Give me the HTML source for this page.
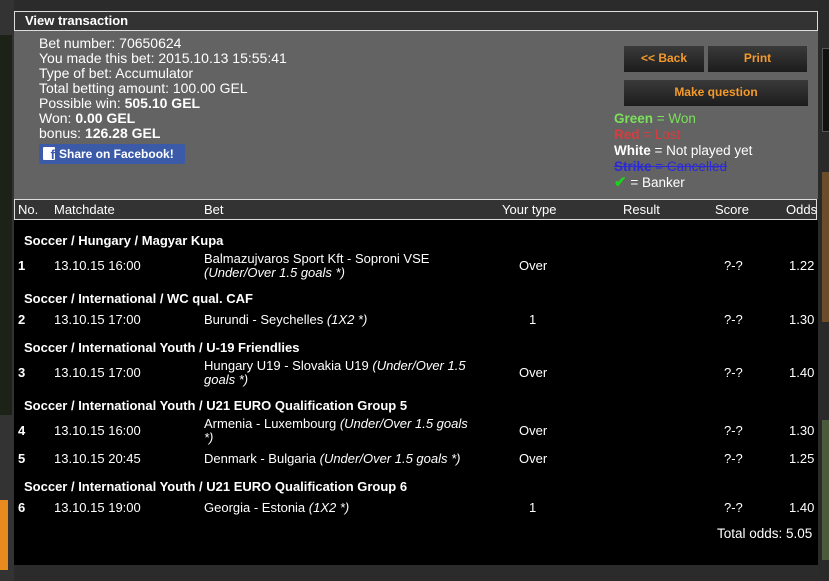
<!DOCTYPE html>
<html><head><meta charset="utf-8"><style>
body{margin:0;width:829px;height:581px;background:#2b2b2b;position:relative;overflow:hidden;font-family:"Liberation Sans",Tahoma,sans-serif;font-size:13px;color:#fff}
.a{position:absolute;white-space:nowrap}
.b{font-weight:bold}
.i{font-style:italic}
.btn{position:absolute;background:linear-gradient(#3a3a3a,#1c1c1c);color:#f39a2a;font-weight:bold;font-size:12px;text-align:center;line-height:25px}
</style></head><body>
<div class="a" style="left:0;top:0;width:14px;height:581px;background:#333"></div>
<div class="a" style="left:0;top:35px;width:12px;height:380px;background:#1c2218"></div>
<div class="a" style="left:0;top:500px;width:8px;height:70px;background:#e98a1e"></div>
<div class="a" style="left:818px;top:0;width:11px;height:581px;background:#2a2a2a"></div>
<div class="a" style="left:822px;top:48px;width:7px;height:82px;background:#111;border:1px solid #555"></div>
<div class="a" style="left:822px;top:172px;width:7px;height:150px;background:#6b4d2c"></div>
<div class="a" style="left:822px;top:420px;width:7px;height:140px;background:#4a5a3a"></div>
<div class="a" style="left:14px;top:11px;width:802px;height:18px;background:#333;border:1px solid #ddd"></div>
<div class="a b" style="left:25px;top:13px;font-size:13px">View transaction</div>
<div class="a" style="left:14px;top:31px;width:804px;height:168px;background:#636363"></div>
<div class="a" style="left:39px;top:36px;line-height:15px;font-size:14px">Bet number: 70650624<br>You made this bet: 2015.10.13 15:55:41<br>Type of bet: Accumulator<br>Total betting amount: 100.00 GEL<br>Possible win: <span class="b">505.10 GEL</span><br>Won: <span class="b">0.00 GEL</span><br>bonus: <span class="b">126.28 GEL</span></div>
<div class="a" style="left:39px;top:144px;width:146px;height:20px;background:#3b5aa8;border-radius:2px"></div>
<div class="a" style="left:43px;top:147px;width:12px;height:13px;background:#fff;color:#3b5aa8;font-weight:bold;font-size:13px;line-height:15px;text-align:right;border-radius:1px">f</div>
<div class="a b" style="left:59px;top:147px;font-size:12px">Share on Facebook!</div>
<div class="btn" style="left:624px;top:46px;width:80px;height:26px">&lt;&lt; Back</div>
<div class="btn" style="left:708px;top:46px;width:99px;height:26px">Print</div>
<div class="btn" style="left:624px;top:80px;width:184px;height:26px">Make question</div>
<div class="a" style="left:614px;top:111px;line-height:16px;font-size:13.5px">
<span style="color:#7be05a"><b>Green</b> = Won</span><br>
<span style="color:#d83c3c"><b>Red</b> = Lost</span><br>
<span><b>White</b> = Not played yet</span><br>
<span style="color:#2a2ad8;text-decoration:line-through"><b>Strike</b> = Cancelled</span><br>
<span style="color:#1cd11c;font-weight:bold;font-size:15px">✔</span> = Banker</div>
<div class="a" style="left:14px;top:199px;width:801px;height:19px;background:#333;border:1px solid #ddd"></div>
<div class="a" style="top:202px;left:18px">No.</div>
<div class="a" style="top:202px;left:54px">Matchdate</div>
<div class="a" style="top:202px;left:204px">Bet</div>
<div class="a" style="top:202px;left:502px">Your type</div>
<div class="a" style="top:202px;left:623px">Result</div>
<div class="a" style="top:202px;left:715px">Score</div>
<div class="a" style="top:202px;left:786px">Odds</div>
<div class="a" style="left:14px;top:220px;width:804px;height:345px;background:#000"></div>
<div class="a b" style="left:24px;top:233px">Soccer / Hungary / Magyar Kupa</div>
<div class="a b" style="left:24px;top:291px">Soccer / International / WC qual. CAF</div>
<div class="a b" style="left:24px;top:340px">Soccer / International Youth / U-19 Friendlies</div>
<div class="a b" style="left:24px;top:398px">Soccer / International Youth / U21 EURO Qualification Group 5</div>
<div class="a b" style="left:24px;top:479px">Soccer / International Youth / U21 EURO Qualification Group 6</div>
<div class="a" style="left:204px;top:252px;line-height:14px">Balmazujvaros Sport Kft - Soproni VSE<br><i>(Under/Over 1.5 goals *)</i></div>
<div class="a" style="left:204px;top:312px">Burundi - Seychelles <i>(1X2 *)</i></div>
<div class="a" style="left:204px;top:359px;line-height:14px">Hungary U19 - Slovakia U19 <i>(Under/Over 1.5</i><br><i>goals *)</i></div>
<div class="a" style="left:204px;top:417px;line-height:14px">Armenia - Luxembourg <i>(Under/Over 1.5 goals</i><br><i>*)</i></div>
<div class="a" style="left:204px;top:451px">Denmark - Bulgaria <i>(Under/Over 1.5 goals *)</i></div>
<div class="a" style="left:204px;top:500px">Georgia - Estonia <i>(1X2 *)</i></div>
<div class="a b" style="left:18px;top:258px">1</div><div class="a" style="left:54px;top:258px">13.10.15 16:00</div><div class="a" style="left:519px;top:258px">Over</div><div class="a" style="left:724px;top:258px">?-?</div><div class="a" style="left:789px;top:258px">1.22</div>
<div class="a b" style="left:18px;top:312px">2</div><div class="a" style="left:54px;top:312px">13.10.15 17:00</div><div class="a" style="left:529px;top:312px">1</div><div class="a" style="left:724px;top:312px">?-?</div><div class="a" style="left:789px;top:312px">1.30</div>
<div class="a b" style="left:18px;top:365px">3</div><div class="a" style="left:54px;top:365px">13.10.15 17:00</div><div class="a" style="left:519px;top:365px">Over</div><div class="a" style="left:724px;top:365px">?-?</div><div class="a" style="left:789px;top:365px">1.40</div>
<div class="a b" style="left:18px;top:423px">4</div><div class="a" style="left:54px;top:423px">13.10.15 16:00</div><div class="a" style="left:519px;top:423px">Over</div><div class="a" style="left:724px;top:423px">?-?</div><div class="a" style="left:789px;top:423px">1.30</div>
<div class="a b" style="left:18px;top:451px">5</div><div class="a" style="left:54px;top:451px">13.10.15 20:45</div><div class="a" style="left:519px;top:451px">Over</div><div class="a" style="left:724px;top:451px">?-?</div><div class="a" style="left:789px;top:451px">1.25</div>
<div class="a b" style="left:18px;top:500px">6</div><div class="a" style="left:54px;top:500px">13.10.15 19:00</div><div class="a" style="left:529px;top:500px">1</div><div class="a" style="left:724px;top:500px">?-?</div><div class="a" style="left:789px;top:500px">1.40</div>
<div class="a" style="left:717px;top:526px;font-size:13.5px">Total odds: 5.05</div>
</body></html>
